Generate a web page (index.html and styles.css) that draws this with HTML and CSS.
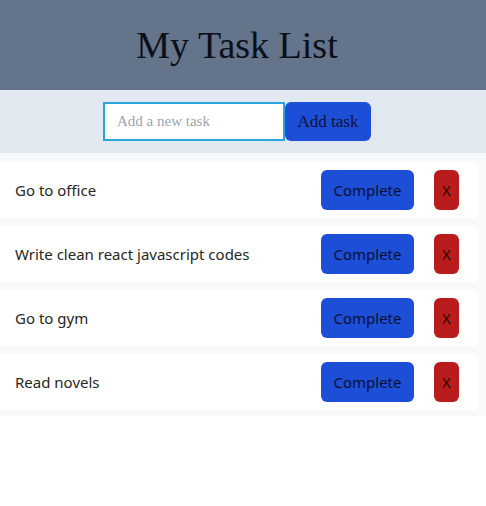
FILE: index.html
```html
<!DOCTYPE html>
<html lang="en">
<head>
<meta charset="utf-8">
<title>My Task List</title>
<link rel="stylesheet" href="styles.css">
</head>
<body>
<header class="header">
  <h1 class="title">My Task List</h1>
</header>
<form class="add-row">
  <input class="task-input" type="text" placeholder="Add a new task">
  <button class="add-btn" type="button">Add task</button>
</form>
<ul class="list">
  <li class="card">
    <span class="task-text">Go to office</span>
    <div class="actions"><button class="complete-btn">Complete</button><button class="remove-btn">X</button></div>
  </li>
  <li class="card">
    <span class="task-text">Write clean react javascript codes</span>
    <div class="actions"><button class="complete-btn">Complete</button><button class="remove-btn">X</button></div>
  </li>
  <li class="card">
    <span class="task-text">Go to gym</span>
    <div class="actions"><button class="complete-btn">Complete</button><button class="remove-btn">X</button></div>
  </li>
  <li class="card">
    <span class="task-text">Read novels</span>
    <div class="actions"><button class="complete-btn">Complete</button><button class="remove-btn">X</button></div>
  </li>
</ul>
</body>
</html>
```
FILE: styles.css
```css
* { box-sizing: border-box; }
body {
  margin: 0;
  background: #ffffff;
  font-family: "Liberation Serif", serif;
}
.header {
  background: #64748b;
  height: 90px;
  display: flex;
  align-items: center;
  justify-content: center;
  padding-right: 12px;
}
.title {
  margin: 0;
  font-family: "Liberation Serif", serif;
  font-weight: 400;
  font-size: 38px;
  color: #0b0f19;
}
.add-row {
  margin: 0;
  background: #e2e8f0;
  height: 63px;
  display: flex;
  align-items: center;
  justify-content: center;
  padding-right: 12px;
}
.task-input {
  width: 182px;
  height: 39px;
  border: 2px solid #2aa4dc;
  outline: none;
  padding: 0 12px;
  font-family: "Liberation Serif", serif;
  font-size: 15px;
  background: #fff;
  border-radius: 0;
}
.task-input::placeholder { color: #9ca3af; }
.add-btn {
  width: 86px;
  height: 39px;
  border: none;
  border-radius: 6px;
  background: #1d4ed8;
  color: #0b1237;
  font-family: "Liberation Serif", serif;
  font-size: 17px;
  padding: 0;
}
.list {
  list-style: none;
  margin: 0;
  padding: 9px 0 6px 0;
  background: #f8f9fb;
  display: flex;
  flex-direction: column;
  gap: 8px;
}
.card {
  margin-right: 8px;
  background: #ffffff;
  border-radius: 0 5px 5px 0;
  height: 56px;
  display: flex;
  align-items: center;
  justify-content: space-between;
  padding: 0 19px 0 15px;
}
.task-text {
  font-family: "Noto Sans", sans-serif;
  font-size: 15px;
  color: #262626;
}
.actions {
  display: flex;
  gap: 20px;
}
.complete-btn, .remove-btn {
  height: 40px;
  border: none;
  border-radius: 6px;
  font-family: "Noto Sans", sans-serif;
  font-size: 15px;
  color: #0b1030;
  padding: 0;
}
.complete-btn {
  width: 93px;
  background: #1d4ed8;
}
.remove-btn {
  width: 25px;
  background: #b91c1c;
  color: #2a0606;
}
```
